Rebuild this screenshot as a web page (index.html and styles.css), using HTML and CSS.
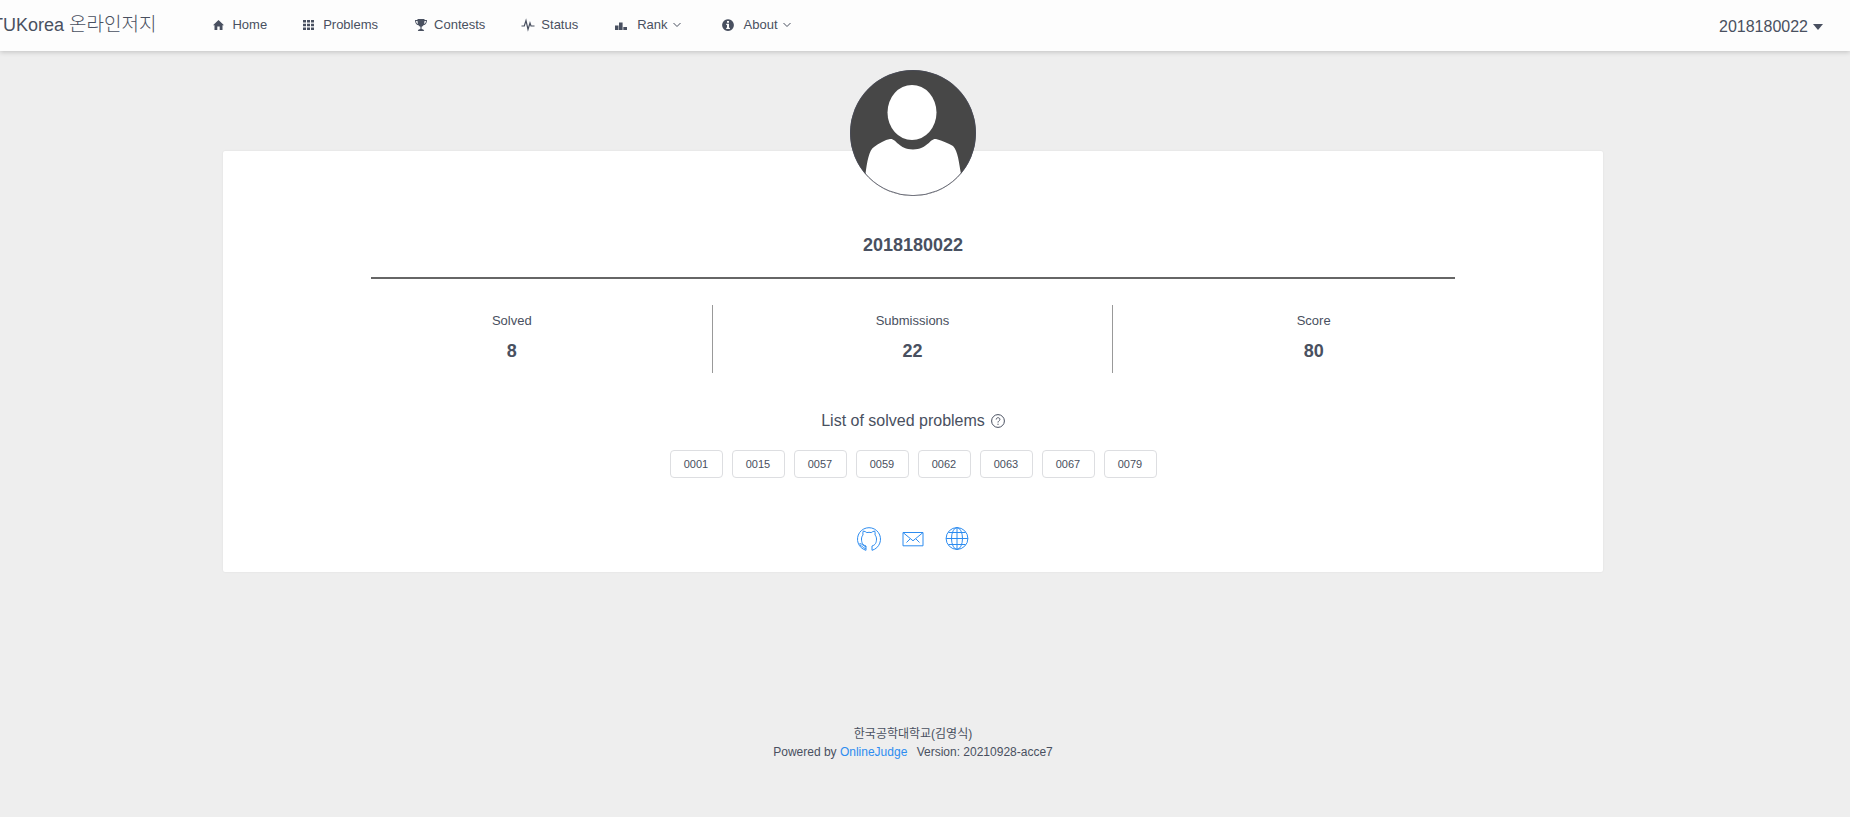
FILE: index.html
```html
<!DOCTYPE html>
<html lang="ko">
<head>
<meta charset="utf-8">
<title>TUKorea 온라인저지</title>
<link rel="stylesheet" href="styles.css">
</head>
<body>
<header class="header">
  <div class="brand">TUKorea <span class="brand-ko">온라인저지</span></div>
  <nav class="nav">
    <a class="nav-item" href="#"><svg class="icon" viewBox="0 0 14 14"><path d="M6.500 2 12 7.300H10.500V12H7.700V8.500H5.300V12H2.500V7.300H1Z"/></svg>Home</a>
    <a class="nav-item" href="#"><svg class="icon" viewBox="0 0 14 14"><path d="M0 2h3v2.600H0zM4 2h3v2.600H4zM8 2h3v2.600H8zM0 5.700h3v2.600H0zM4 5.700h3v2.600H4zM8 5.700h3v2.600H8zM0 9.400h3V12H0zM4 9.400h3V12H4zM8 9.400h3V12H8z"/></svg>Problems</a>
    <a class="nav-item" href="#"><svg class="icon" viewBox="0 0 14 14"><path d="M3.500 1h7v1H13c0 3-1.200 4.800-3.500 5.200C9 8 8.300 8.500 7.600 8.700V11c1.400.2 2.200.7 2.600 2H3.800c.4-1.300 1.200-1.800 2.600-2V8.700C5.700 8.500 5 8 4.500 7.200 2.200 6.800 1 5 1 2h2.500zM2 3c.1 1.500.8 2.600 1.900 3L3.500 3zM12 3h-1.500l-.4 3C11.200 5.600 11.900 4.500 12 3z" fill-rule="evenodd"/></svg>Contests</a>
    <a class="nav-item" href="#"><svg class="icon" viewBox="0 0 14 14"><path class="stroke" d="M.500 8h2.800L5 2.500l2 9L9 5l1 3h3.500"/></svg>Status</a>
    <a class="nav-item" href="#"><svg class="icon icon-wide" viewBox="0 0 17 14"><path d="M1 7.500h3.500V12H1zM5 4.500h3.600V12H5zM9.300 9H13v3H9.300z"/></svg>Rank<svg class="chevron" viewBox="0 0 10 10"><path class="stroke thin" d="m1.500 3 3.500 3.500L8.500 3"/></svg></a>
    <a class="nav-item" href="#"><svg class="icon icon-wide" viewBox="0 0 17 14"><path fill-rule="evenodd" d="M7 1.200a5.900 5.900 0 1 0 .01 0zM6 3h2v1.700H6zM5.200 5.700H8v4h.9V11H5.200V9.700H6V7h-.8z"/></svg>About<svg class="chevron" viewBox="0 0 10 10"><path class="stroke thin" d="m1.500 3 3.500 3.500L8.500 3"/></svg></a>
  </nav>
  <button class="user" type="button">2018180022<svg class="caret" viewBox="0 0 10 6"><path d="M0 0h10L5 6z"/></svg></button>
</header>
<main class="page">
  <section class="card">
    <svg class="avatar" viewBox="0 0 126 126" role="img" aria-label="avatar">
      <clipPath id="round"><circle cx="63" cy="63" r="63"/></clipPath>
      <g clip-path="url(#round)">
        <rect width="126" height="126" fill="#474747"/>
        <ellipse cx="62" cy="42.500" rx="24.500" ry="27.500" fill="#fff"/>
        <path fill="#fff" d="M15 126 15.500 104C17 92 19 80 24 77 29 73 35 70 40 69 46 68 48 79 63 79.500 78 79 80 68 86 69 93 71 98 73 103 76 108 81 109 93 111 104V126Z"/>
      </g>
      <circle cx="63" cy="63" r="62.600" fill="none" stroke="#474a58" stroke-width=".8"/>
    </svg>
    <h1 class="username">2018180022</h1>
    <hr class="rule">
    <dl class="stats">
      <div class="stat"><dt>Solved</dt><dd>8</dd></div>
      <div class="stat"><dt>Submissions</dt><dd>22</dd></div>
      <div class="stat"><dt>Score</dt><dd>80</dd></div>
    </dl>
    <h2 class="list-title">List of solved problems <svg class="help" viewBox="0 0 14 14"><circle class="stroke thin" cx="7" cy="7" r="6.400"/><path class="stroke thin" d="M5.200 5.500c0-2.400 3.700-2.400 3.700 0C8.900 6.800 7 6.900 7 8.500M7 9.700v1.200"/></svg></h2>
    <div class="problems">
      <button type="button">0001</button>
      <button type="button">0015</button>
      <button type="button">0057</button>
      <button type="button">0059</button>
      <button type="button">0062</button>
      <button type="button">0063</button>
      <button type="button">0067</button>
      <button type="button">0079</button>
    </div>
    <div class="social">
      <a href="#" aria-label="GitHub"><svg class="social-icon" viewBox="0 0 24 24"><path d="M9 23.300V19C5.500 18 4.500 15.500 4.500 12 4.500 10.500 5 9 6 8 5.700 6.500 5.800 5.200 6.300 4 7.800 4.200 9 5 9.800 5.600 11.200 5.200 12.800 5.200 14.200 5.600 15 5 16.200 4.200 17.700 4 18.200 5.200 18.300 6.500 18 8 19 9 19.500 10.500 19.500 12 19.500 15.500 18.500 18 15 19V23.300A11.500 11.500 0 1 0 9 23.300M9 21.300C5.500 21.800 5.500 18.500 2.500 17.800M9 19.500C6.500 19.600 6 16.800 2.500 16.500"/></svg></a>
      <a href="#" aria-label="Email"><svg class="social-icon" viewBox="0 0 24 24"><path d="M2 5.500h20v13.300H2zM2 5.500l10 8.300 10-8.300M5.500 15.500 9 12M18.500 15.500 15 12"/></svg></a>
      <a href="#" aria-label="Website"><svg class="social-icon" viewBox="0 0 24 24"><circle cx="12" cy="11.500" r="10.900"/><ellipse cx="12" cy="11.500" rx="5.500" ry="10.900"/><path d="M12 .6v21.800M1.100 11.500h21.800M3.500 5.500h17M3.500 17.500h17"/></svg></a>
    </div>
  </section>
</main>
<footer class="footer">
  <p>한국공학대학교(김영식)</p>
  <p>Powered by <a href="#">OnlineJudge</a> <span class="version">Version: 20210928-acce7</span></p>
</footer>
</body>
</html>
```
FILE: styles.css
```css
* {
  box-sizing: border-box;
}
body {
  margin: 0;
  background: #eee;
  color: #495060;
  font: 12px/18px "Liberation Sans", "Noto Sans CJK KR", sans-serif;
  overflow-x: hidden;
}
a {
  color: #2d8cf0;
  text-decoration: none;
}
h1, h2, p, dl, dd {
  margin: 0;
}
button {
  font: inherit;
  color: inherit;
  cursor: pointer;
}
svg {
  fill: currentColor;
}
.stroke {
  fill: none;
  stroke: currentColor;
  stroke-width: 1.2;
}
.thin {
  stroke-width: 1;
}
.header {
  display: flex;
  align-items: center;
  height: 51px;
  padding-right: 27px;
  padding-bottom: 2px;
  background: #fdfdfd;
  box-shadow: 0 1px 5px rgba(0, 0, 0, .2);
}
.brand {
  margin-left: -8px;
  font-size: 18px;
  line-height: 28px;
  white-space: nowrap;
}
.brand-ko {
  font-size: 19px;
  font-weight: 300;
}
.nav {
  display: flex;
  flex: 1;
  gap: 36px;
  margin-left: 56px;
  font-size: 13px;
}
.nav-item {
  display: flex;
  align-items: center;
  color: inherit;
}
.icon {
  width: 14px;
  height: 14px;
  margin-right: 6px;
}
.icon-wide {
  width: 17px;
}
.chevron {
  width: 10px;
  height: 10px;
  margin: 0 3px 0 4px;
}
.user {
  display: flex;
  align-items: center;
  gap: 5px;
  padding: 4px 0 0;
  border: 0;
  background: none;
  font-size: 16px;
}
.caret {
  width: 10px;
  height: 6px;
}
.page {
  padding: 100px 247px 0 223px;
}
.card {
  display: flex;
  flex-direction: column;
  align-items: center;
  padding: 0 89px 21px;
  background: #fff;
  border-radius: 2px;
  box-shadow: 0 0 2px rgba(0, 0, 0, .08);
}
.avatar {
  width: 126px;
  height: 126px;
  margin-top: -81px;
}
.username {
  margin-top: 38px;
  font-size: 18px;
  line-height: 22px;
}
.rule {
  align-self: stretch;
  height: 2px;
  margin: 21px 59px 26px;
  border: 0;
  background: #666;
}
.stats {
  display: grid;
  grid-template-columns: repeat(3, 1fr);
  align-self: stretch;
  text-align: center;
}
.stat {
  height: 68px;
  padding-top: 7px;
  border-right: 1px solid #999;
}
.stat:last-child {
  border-right: 0;
}
.stat dt {
  font-size: 13px;
}
.stat dd {
  margin-top: 10px;
  font-size: 18px;
  font-weight: 700;
  line-height: 22px;
}
.list-title {
  display: flex;
  align-items: center;
  gap: 6px;
  margin: 37px 0 18px;
  font-size: 16px;
  font-weight: 400;
  line-height: 22px;
}
.help {
  width: 14px;
  height: 14px;
}
.problems {
  display: flex;
  gap: 9px;
}
.problems button {
  width: 53px;
  height: 28px;
  padding: 0;
  border: 1px solid #dddee1;
  border-radius: 4px;
  background: #fff;
  font-size: 11px;
}
.social {
  display: flex;
  gap: 20px;
  margin-top: 49px;
}
.social-icon {
  display: block;
  width: 24px;
  height: 24px;
  fill: none;
  stroke: currentColor;
}
.footer {
  margin: 153px 24px 0 0;
  text-align: center;
}
.version {
  margin-left: 6px;
}
```
